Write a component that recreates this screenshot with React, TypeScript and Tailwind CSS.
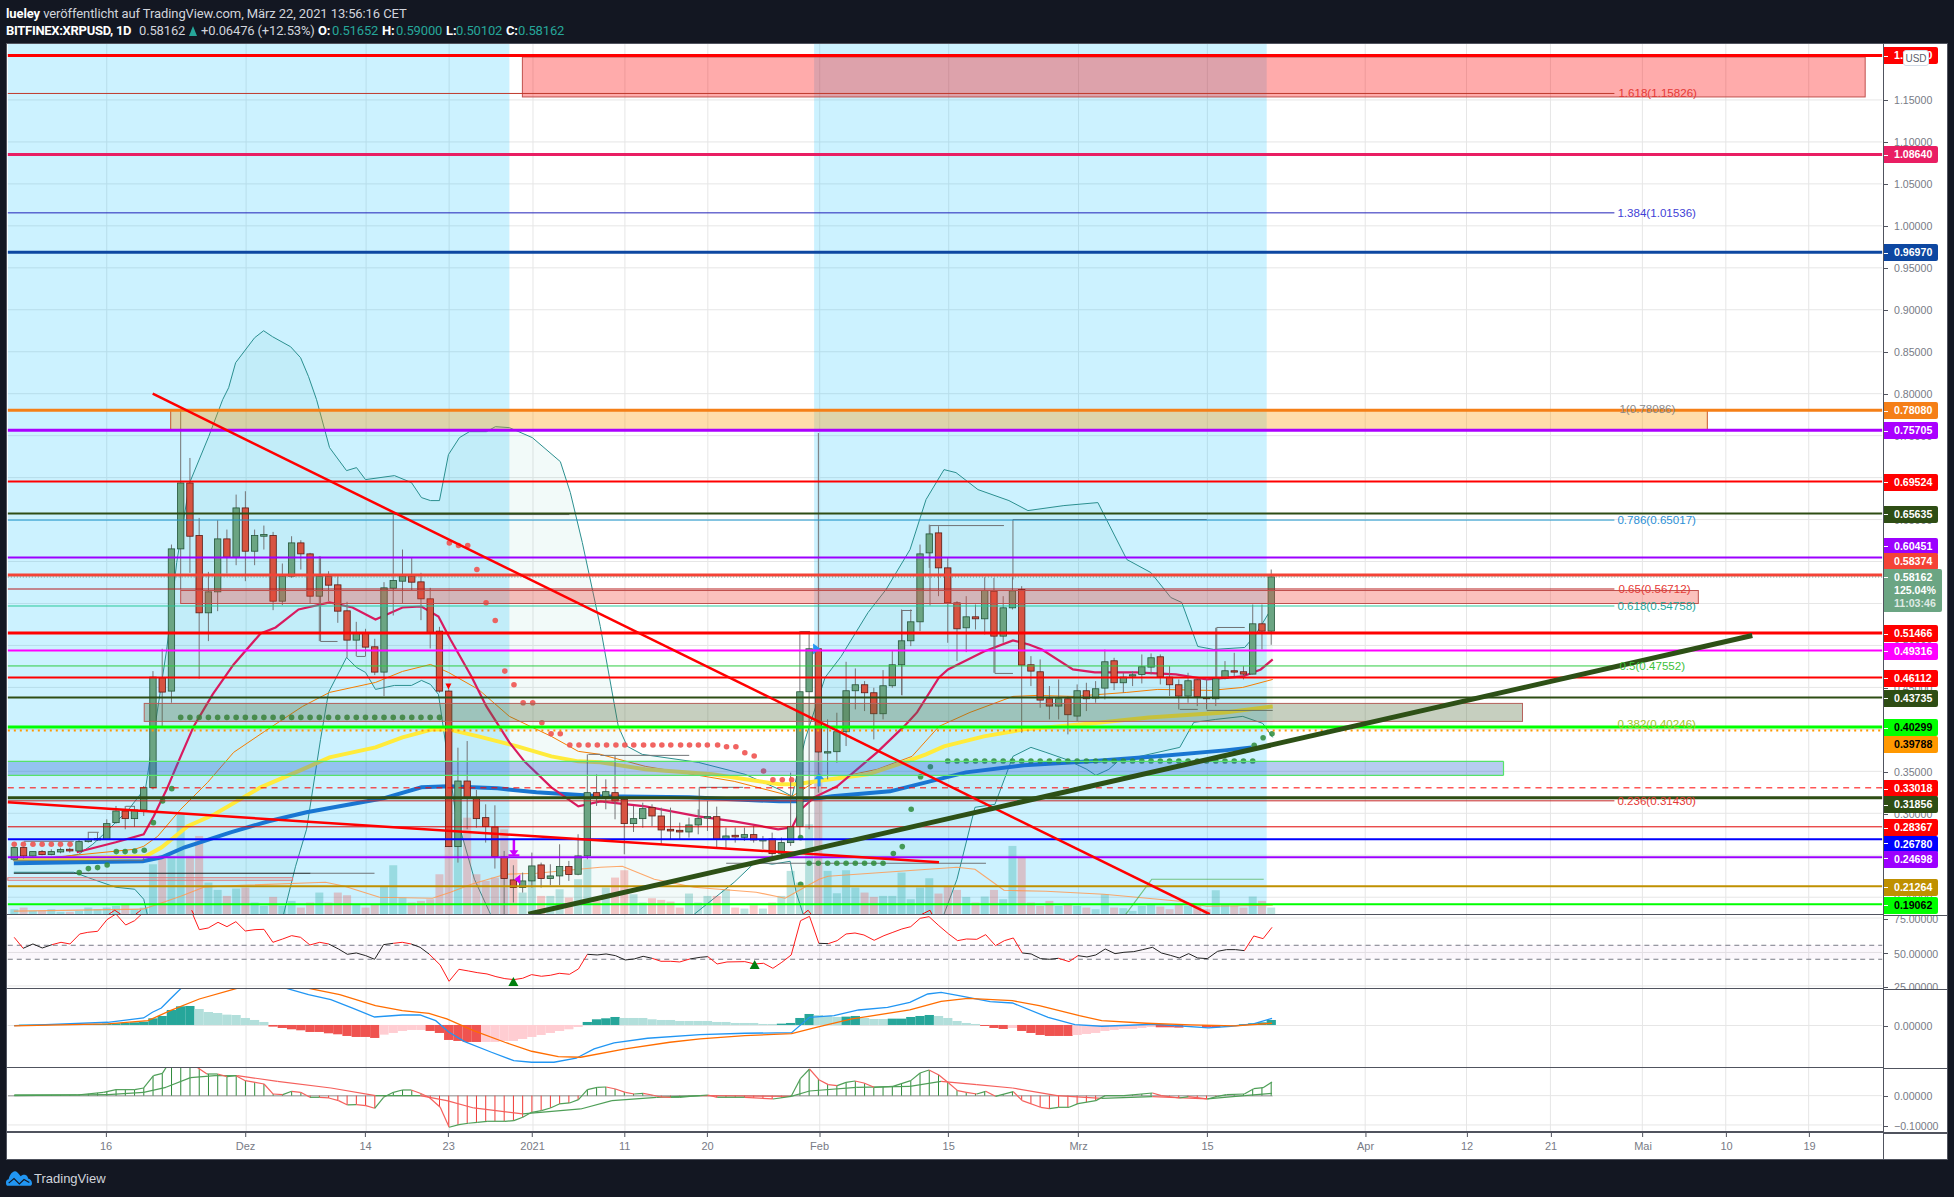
import React from "react";

type Pt = [number, number];
const SANS = "font-['Liberation_Sans',Arial,sans-serif]";

const dayX = (d: number) => 106 + 9.25 * d;
const z5 = (pts: number[][]) => pts.map(([x, y]) => [x / 2.613, y / 3 + 400] as Pt);
const z7 = (pts: number[][]) => pts.map(([x, y]) => [x / 2.24 + 600, y / 3 + 500] as Pt);
const z6 = (pts: number[][]) => pts.map(([x, y]) => [x / 2.24, y / 3 + 880] as Pt);
const z8 = (pts: number[][]) => pts.map(([x, y]) => [x / 2.24 + 700, y / 3 + 880] as Pt);
const poly = (pts: Pt[]) => pts.map(([x, y]) => `${x.toFixed(1)},${y.toFixed(1)}`).join(" ");

// body top, body bottom, wick top, wick bottom, up
const candlesA = [
  [1345, 1380, 1345, 1382, 1], [1345, 1370, 1345, 1378, 0], [1357, 1370, 1357, 1372, 1], [1357, 1366, 1352, 1368, 0],
  [1357, 1366, 1350, 1368, 1], [1351, 1358, 1345, 1362, 1], [1350, 1355, 1345, 1360, 0], [1327, 1355, 1320, 1358, 1],
  [1320, 1327, 1300, 1330, 1], [1318, 1322, 1300, 1325, 1], [1273, 1320, 1260, 1322, 1], [1235, 1270, 1220, 1273, 1],
  [1235, 1258, 1220, 1290, 0], [1232, 1258, 1220, 1283, 1], [1165, 1232, 1160, 1250, 1], [833, 1165, 815, 1170, 1],
  [835, 878, 748, 980, 0], [448, 875, 435, 910, 1], [250, 448, 30, 570, 1], [250, 410, 175, 520, 0],
  [408, 640, 355, 838, 0], [577, 640, 517, 725, 1], [418, 577, 362, 635, 1], [418, 473, 390, 522, 0],
  [325, 473, 285, 497, 1], [325, 455, 275, 545, 0], [408, 455, 390, 497, 1], [405, 410, 378, 450, 1],
  [408, 605, 397, 632, 0], [530, 605, 492, 617, 1], [430, 530, 410, 535, 1], [430, 463, 422, 510, 0],
  [463, 590, 460, 612, 0], [530, 590, 470, 725, 1], [530, 557, 515, 605, 0], [556, 635, 530, 670, 0],
  [634, 722, 607, 775, 0], [700, 722, 667, 770, 1], [700, 743, 688, 770, 0], [742, 818, 718, 827, 0],
  [565, 818, 548, 890, 1], [543, 566, 345, 648, 1], [530, 545, 450, 612, 1], [530, 548, 473, 572, 0],
  [547, 598, 520, 662, 0], [598, 700, 565, 747, 0], [695, 875, 682, 880, 0], [875, 1342, 870, 1342, 0],
  [1145, 1342, 1045, 1390, 1], [1145, 1195, 1025, 1290, 0], [1195, 1258, 1172, 1285, 0], [1255, 1282, 1215, 1330, 0],
  [1283, 1372, 1218, 1408, 0], [1373, 1438, 1355, 1550, 0], [1442, 1465, 1398, 1510, 0], [1445, 1465, 1420, 1480, 1],
  [1400, 1445, 1360, 1465, 1], [1397, 1438, 1390, 1465, 0], [1430, 1438, 1395, 1458, 1], [1402, 1430, 1335, 1458, 1],
  [1402, 1426, 1385, 1445, 0], [1370, 1425, 1305, 1428, 1], [1180, 1370, 1065, 1380, 1], [1180, 1192, 1125, 1220, 0],
];
const candlesB = [
  [877, 892, 840, 930, 1], [880, 905, 770, 960, 0], [900, 973, 890, 1065, 0], [958, 973, 920, 998, 1],
  [928, 958, 910, 985, 1], [925, 950, 915, 980, 0], [950, 992, 925, 1035, 0], [990, 995, 925, 1022, 0],
  [993, 998, 970, 1022, 0], [977, 998, 955, 1015, 1], [958, 977, 930, 1005, 1], [952, 956, 905, 995, 1],
  [952, 1020, 922, 1045, 0], [1010, 1020, 985, 1050, 1], [1008, 1013, 985, 1030, 0], [1006, 1014, 985, 1025, 1],
  [1006, 1022, 980, 1030, 0], [1021, 1025, 1010, 1050, 1], [1019, 1063, 1000, 1075, 0], [1030, 1062, 1015, 1080, 1],
  [982, 1030, 820, 1040, 1], [577, 982, 395, 1020, 1], [448, 577, 395, 990, 1], [448, 758, -200, 880, 0],
  [757, 761, 660, 840, 1], [697, 757, 640, 790, 1], [574, 697, 487, 740, 1], [556, 574, 507, 630, 1],
  [556, 580, 545, 635, 0], [580, 643, 565, 720, 0], [559, 643, 512, 660, 1], [496, 559, 455, 565, 1],
  [424, 496, 330, 587, 1], [367, 424, 330, 440, 1], [163, 367, 135, 395, 1], [103, 160, 75, 205, 1],
  [100, 205, 80, 290, 0], [205, 310, 175, 430, 0], [310, 388, 305, 485, 0], [352, 385, 290, 458, 1],
  [352, 358, 315, 390, 0], [273, 358, 233, 405, 1], [275, 410, 235, 520, 0], [325, 410, 290, 430, 1],
  [274, 325, 232, 330, 1], [270, 497, 260, 700, 0], [496, 515, 470, 560, 0], [517, 602, 480, 625, 0],
  [598, 620, 560, 660, 0], [598, 620, 540, 660, 1], [598, 646, 590, 705, 0], [574, 650, 555, 665, 1],
  [574, 598, 550, 635, 0], [568, 596, 545, 610, 1], [487, 566, 450, 600, 1], [484, 550, 475, 572, 0],
  [533, 550, 520, 580, 1], [526, 530, 515, 560, 1], [502, 525, 465, 552, 1], [475, 503, 462, 525, 1],
  [472, 533, 465, 555, 0], [533, 556, 500, 590, 0], [556, 590, 540, 630, 0], [544, 590, 520, 610, 1],
  [541, 592, 535, 620, 0], [595, 598, 540, 630, 0], [538, 598, 385, 620, 1], [514, 536, 485, 540, 1],
  [514, 518, 460, 535, 0], [517, 524, 500, 540, 0], [373, 524, 315, 525, 1], [373, 395, 315, 450, 0],
  [232, 395, 210, 436, 1],
];
const candles = [
  ...candlesA.map(([t, b, wt, wb, up]) => ({ t: t / 3 + 400, b: b / 3 + 400, wt: wt / 3 + 400, wb: wb / 3 + 400, up: !!up })),
  ...candlesB.map(([t, b, wt, wb, up]) => ({ t: t / 3 + 500, b: b / 3 + 500, wt: wt / 3 + 500, wb: wb / 3 + 500, up: !!up })),
];

const volA = [
  1530, 1525, 1535, 1535, 1530, 1538, 1538, 1535, 1525, 1530, 1525, 1520, 1515, 1530, 1525, 1395, 1370, 1370, 1245, 1370, 1310,
  1450, 1472, 1490, 1468, 1465, 1510, 1520, 1493, 1520, 1505, 1525, 1510, 1480, 1510, 1480, 1488, 1515, 1525, 1515, 1460, 1398,
  1495, 1510, 1505, 1500, 1425, 1340, 1260, 1255, 1425, 1445, 1435, 1290, 1380, 1480, 1430, 1490, 1490, 1470, 1495, 1440, 1380, 1505,
];
const volB = [
  1165, 1135, 1113, 1185, 1210, 1197, 1202, 1207, 1225, 1183, 1210, 1190, 1190, 1170, 1225, 1228, 1218, 1228, 1210, 1190, 1115,
  1150, 975, 760, 1115, 1182, 1113, 1165, 1180, 1193, 1190, 1190, 1120, 1200, 1165, 1137, 1183, 1160, 1172, 1193, 1210, 1192,
  1172, 1200, 1040, 1075, 1210, 1220, 1205, 1220, 1215, 1220, 1225, 1230, 1185, 1225, 1227, 1235, 1220, 1215, 1222, 1230, 1215,
  1220, 1215, 1230, 1173, 1215, 1220, 1225, 1192, 1205, 1225,
];
const volumes = [...volA.map((v) => v / 3 + 400), ...volB.map((v) => v / 3 + 500)];

const bbUpper: Pt[] = [
  [13, 860], [60, 858], [78, 855], [92, 845], [105, 833], [128, 810], [145, 788], [166, 650], [176, 563], [189, 483], [208, 437],
  [222, 400], [228, 388], [235, 363], [254, 338], [263, 331], [272, 337], [290, 347], [300, 358], [308, 377], [316, 400], [329, 448],
  [346, 471], [356, 468], [365, 480], [394, 476], [411, 483], [421, 498], [430, 501], [439, 501], [448, 455], [459, 438], [469, 432],
  [486, 432], [495, 427], [509, 428], [532, 438], [560, 462], [570, 493], [582, 543], [600, 627], [618, 727], [627, 747], [642, 755],
  [698, 763], [745, 775], [779, 790], [792, 797], [805, 740], [825, 678], [841, 657], [868, 613], [886, 590], [910, 550], [926, 500],
  [944, 470], [956, 473], [978, 490], [1009, 501], [1028, 511], [1064, 506], [1098, 503], [1127, 560], [1151, 573], [1171, 598],
  [1182, 603], [1198, 647], [1214, 650], [1245, 648], [1256, 635], [1273, 607],
];
const bbLower: Pt[] = [
  [13, 873], [73, 873], [92, 880], [115, 888], [134, 890], [143, 900], [147, 917], [150, 1000], [280, 1000], [283, 915], [295, 867],
  [306, 830], [320, 740], [328, 693], [346, 658], [356, 668], [365, 673], [375, 690], [394, 686], [411, 686], [421, 681], [430, 685],
  [438, 695], [446, 750], [455, 813], [474, 880], [491, 917], [495, 1000], [690, 1000], [694, 915], [734, 883], [756, 862], [772, 865],
  [790, 862], [796, 893], [803, 915], [806, 1000], [940, 1000], [944, 915], [957, 880], [975, 808], [995, 805], [1013, 757], [1031, 748],
  [1046, 753], [1066, 760], [1087, 770], [1096, 776], [1109, 770], [1118, 762], [1180, 748], [1194, 723], [1216, 720], [1243, 717],
  [1263, 724], [1273, 738],
];
const ma20: Pt[] = [
  [76, 853], [115, 843], [143, 835], [153, 817], [166, 790], [180, 757], [193, 727], [212, 695], [233, 665], [260, 634], [275, 628],
  [298, 610], [329, 603], [352, 608], [375, 620], [402, 608], [421, 607], [438, 617], [450, 640], [471, 677], [486, 707], [509, 743],
  [524, 762], [551, 788], [578, 807], [600, 802], [645, 807], [698, 817], [734, 822], [778, 830], [792, 828], [801, 810], [814, 798],
  [837, 787], [877, 753], [904, 727], [917, 713], [939, 678], [948, 670], [984, 652], [1013, 641], [1029, 645], [1042, 650], [1073, 670],
  [1095, 673], [1136, 673], [1176, 675], [1207, 680], [1243, 677], [1261, 670], [1273, 660],
];
const ma50: Pt[] = [
  [13, 862], [134, 850], [143, 847], [157, 837], [180, 810], [207, 783], [233, 753], [264, 732], [302, 707], [329, 693], [375, 683],
  [402, 672], [430, 665], [448, 673], [478, 690], [509, 717], [551, 737], [578, 752], [600, 755], [645, 767], [734, 782], [792, 797],
  [814, 783], [877, 770], [912, 757], [939, 727], [970, 713], [1013, 697], [1037, 696], [1073, 697], [1127, 693], [1158, 690], [1211, 691],
  [1243, 688], [1273, 680],
];
const ma100: Pt[] = [
  [13, 861], [145, 857], [161, 848], [187, 827], [214, 815], [260, 788], [302, 770], [329, 758], [375, 748], [402, 738], [432, 730],
  [448, 730], [478, 737], [517, 747], [551, 757], [578, 762], [600, 763], [645, 770], [712, 775], [779, 785], [796, 785], [823, 781],
  [868, 775], [904, 763], [926, 755], [944, 747], [984, 737], [1024, 730], [1091, 724], [1149, 718], [1225, 713], [1273, 707],
];
const ma200: Pt[] = [
  [13, 864], [142, 862], [161, 858], [184, 848], [230, 833], [268, 822], [306, 813], [383, 799], [421, 788], [448, 787], [497, 789],
  [536, 793], [600, 797], [689, 798], [779, 802], [796, 802], [832, 797], [890, 792], [930, 782], [966, 773], [1024, 766], [1091, 762],
  [1158, 757], [1225, 751], [1252, 748],
];
const volMa: Pt[] = [
  [13, 912], [142, 910], [157, 905], [180, 897], [203, 888], [241, 886], [325, 883], [344, 887], [379, 898], [432, 899], [450, 893],
  [471, 885], [505, 875], [536, 874], [600, 868], [622, 867], [654, 880], [694, 888], [756, 893], [785, 899], [801, 890], [819, 880],
  [828, 877], [957, 868], [975, 870], [1004, 891], [1046, 892], [1104, 895], [1180, 902], [1207, 907], [1273, 906],
];

const redDots: Pt[] = [
  ...z5([[35, 1335], [59, 1335], [84, 1335], [108, 1335], [132, 1335], [156, 1335], [181, 1335], [1173, 430], [1197, 438], [1221, 438], [1245, 510], [1269, 610], [1293, 663], [1318, 815], [1342, 856], [1366, 910], [1391, 910], [1415, 970], [1439, 1003], [1463, 1003], [1488, 1037], [1512, 1037], [1536, 1037], [1560, 1037]]),
  ...z7([[14, 737], [35, 737], [55, 737], [75, 737], [97, 737], [118, 737], [138, 737], [158, 737], [180, 737], [200, 737], [220, 737], [240, 737], [263, 737], [283, 742], [304, 742], [324, 760], [345, 770], [366, 815], [387, 841], [408, 841], [429, 841]]),
];
const greenDots: Pt[] = [
  ...z5([[205, 1420], [229, 1408], [253, 1405], [278, 1397], [302, 1357], [325, 1357], [350, 1355], [375, 1353], [399, 1270], [423, 1205], [447, 1168]]),
  ...Array.from({ length: 29 }, (_, i) => [dayX(8 + i), 718] as Pt),
  ...z7([[449, 1155], [449, 1015], [657, 1063], [677, 1042], [697, 930], [718, 832], [740, 802], [1466, 738], [1486, 715], [1506, 703]]),
  ...Array.from({ length: 34 }, (_, i) => [dayX(91 + i), 761.7] as Pt),
  ...Array.from({ length: 9 }, (_, i) => [dayX(76 + i), 864] as Pt),
];

// gray step lines left by the high/low indicator
const steps: number[][] = [
  [930, 526, 1004, 526], [930, 526, 930, 606], [1013, 520, 1207, 520], [1013, 520, 1013, 580], [902, 611, 912, 611], [902, 611, 902, 696],
  [800, 632, 810, 632], [995, 674, 1013, 674], [995, 637, 995, 674], [1180, 710, 1198, 710], [1207, 711, 1273, 711], [1217, 628, 1245, 628],
  [1217, 628, 1217, 699], [1254, 604, 1263, 604], [726, 864, 986, 864], [699, 788, 743, 788], [699, 788, 699, 817], [600, 756, 689, 756],
  [394, 515, 569, 515], [320, 642, 337, 642], [320, 557, 320, 642], [356, 657, 365, 657], [87, 833, 98, 833], [23, 842, 73, 842],
  [125, 807, 134, 807], [588, 755, 600, 755], [310, 874, 374, 874], [12, 861, 143, 861], [143, 858, 143, 861],
];

const rsiPts: Pt[] = [
  ...z6([[30, 175], [50, 208], [72, 195], [93, 207], [115, 197], [135, 190], [155, 195], [177, 165], [195, 160], [217, 157], [238, 122], [258, 105], [280, 138], [300, 125], [320, 100], [340, 85], [420, 85], [430, 105], [445, 152], [465, 147], [487, 130], [507, 143], [527, 128], [548, 156], [570, 152], [590, 151], [610, 190], [632, 180], [652, 170], [672, 175], [693, 198], [715, 190], [735, 195], [757, 210], [777, 226], [797, 222], [818, 230], [838, 241], [858, 197], [880, 193], [900, 190], [920, 195], [940, 205], [960, 225], [985, 258], [1005, 307], [1027, 271], [1048, 276], [1068, 281], [1090, 285], [1110, 293], [1130, 299], [1150, 302], [1170, 298], [1190, 287], [1212, 292], [1232, 289], [1252, 283], [1275, 286], [1295, 270], [1315, 226], [1337, 228], [1357, 225], [1378, 230], [1400, 243], [1420, 240], [1440, 232], [1460, 238], [1480, 247], [1502, 247], [1522, 249], [1545, 240]]),
  ...z8([[0, 235], [17, 233], [38, 255], [60, 249], [100, 248], [122, 255], [142, 253], [163, 268], [183, 250], [204, 228], [225, 125], [245, 112], [266, 193], [287, 194], [307, 185], [327, 165], [347, 162], [367, 168], [390, 184], [412, 170], [432, 160], [452, 150], [472, 143], [493, 118], [513, 113], [535, 140], [557, 165], [577, 185], [597, 180], [620, 181], [640, 167], [662, 200], [682, 185], [702, 177], [722, 222], [742, 225], [763, 239], [783, 241], [803, 238], [827, 248], [847, 230], [867, 234], [887, 228], [908, 210], [930, 224], [950, 220], [972, 218], [992, 212], [1014, 205], [1034, 222], [1054, 229], [1074, 237], [1095, 224], [1115, 237], [1137, 239], [1160, 217], [1180, 212], [1200, 212], [1220, 215], [1241, 171], [1262, 179], [1282, 145]]),
];

const macdTops = [
  438, 437, 437, 437, 436, 436, 436, 436, 435, 435, 434, 433, 432, 430, 428, 418, 411, 393, 382, 381, 390, 399, 402, 407, 408, 417, 423, 429,
  443, 447, 451, 454, 459, 459, 463, 466, 471, 474, 474, 477, 467, 462, 456, 453, 453, 456, 462, 483, 486, 489, 489, 488.9, 488.9, 486, 486, 480,
  474, 468, 462, 456, 451, 444, 429, 421, 418, 414, 417, 417, 417, 421, 423, 423, 426, 426, 426,
  426, 429, 429, 432, 432, 432, 435, 435, 434, 432, 417, 405, 408, 411, 414, 413, 411, 417, 420, 420, 419, 419, 414, 411, 408, 411, 417, 426,
  432, 435, 441, 447, 450, 447, 456, 462, 468, 471, 471, 471, 468, 465, 462, 456, 453, 450, 450, 447, 444, 445, 445, 446, 443, 441, 445,
  445, 441, 438, 436, 433, 430, 423,
];
const macdBars = (() => {
  let strong = true;
  return macdTops.map((top, i) => {
    const v = 438 - top;
    const prev = i ? 438 - macdTops[i - 1] : v;
    if (v !== prev) strong = v >= 0 ? v > prev : v < prev;
    const fill = v >= 0 ? (strong ? "#26a69a" : "#b2dfdb") : strong ? "#ef5350" : "#ffcdd2";
    return { top, fill };
  });
})();
const macdBlue: Pt[] = [
  ...z6([[30, 440], [100, 437], [240, 430], [320, 417], [340, 400], [360, 387], [380, 360], [405, 327], [430, 290], [600, 290], [640, 328], [690, 347], [740, 362], [790, 388], [838, 414], [900, 408], [940, 408], [975, 425], [1005, 460], [1040, 488], [1100, 520], [1150, 545], [1190, 550], [1240, 550], [1290, 538], [1330, 510], [1375, 492], [1450, 478], [1568, 467]]),
  ...z8([[100, 463], [205, 461], [245, 415], [300, 410], [355, 393], [420, 385], [470, 370], [510, 345], [540, 340], [580, 350], [650, 368], [700, 372], [780, 415], [840, 437], [900, 442], [1020, 436], [1140, 447], [1190, 442], [1240, 435], [1282, 418]]),
];
const macdOrange: Pt[] = [
  ...z6([[30, 441], [240, 435], [330, 425], [380, 395], [445, 360], [530, 328], [560, 318], [660, 318], [690, 328], [760, 347], [840, 380], [900, 395], [960, 403], [1000, 420], [1060, 455], [1130, 490], [1190, 517], [1250, 533], [1300, 535], [1400, 510], [1500, 490], [1568, 480]]),
  ...z8([[100, 470], [205, 464], [260, 445], [340, 420], [470, 393], [540, 367], [600, 358], [700, 365], [760, 380], [850, 410], [900, 425], [1000, 433], [1100, 438], [1200, 441], [1282, 433]]),
];
const osciA: Pt[] = [
  ...z6([[30, 648], [170, 648], [230, 640], [258, 632], [300, 632], [320, 627], [342, 590], [362, 583], [372, 562], [385, 530], [425, 530], [440, 565], [462, 585], [486, 585], [507, 593], [527, 590], [548, 605], [570, 610], [590, 615], [610, 645], [632, 647], [652, 637], [672, 640], [693, 655], [715, 655], [735, 657], [757, 665], [777, 678], [797, 677], [818, 680], [838, 688], [858, 655], [880, 640], [900, 633], [920, 633], [940, 643], [960, 655], [985, 685], [1005, 745], [1027, 737], [1048, 733], [1068, 730], [1090, 727], [1110, 727], [1130, 727], [1150, 725], [1170, 715], [1190, 700], [1212, 695], [1232, 687], [1252, 675], [1275, 672], [1295, 662], [1315, 632], [1337, 625], [1357, 624], [1378, 630], [1400, 640], [1420, 645], [1440, 643], [1460, 648], [1480, 654], [1502, 655], [1522, 655], [1545, 652]]),
  ...z8([[0, 650], [17, 648], [38, 655], [100, 655], [163, 660], [204, 652], [225, 598], [245, 570], [266, 602], [287, 617], [307, 620], [327, 610], [347, 606], [367, 612], [390, 625], [432, 622], [472, 605], [493, 582], [513, 573], [535, 588], [557, 612], [577, 635], [597, 640], [620, 645], [640, 637], [662, 652], [702, 638], [722, 665], [763, 685], [783, 689], [803, 685], [827, 685], [847, 674], [887, 665], [908, 650], [950, 650], [1014, 642], [1034, 650], [1074, 657], [1095, 653], [1137, 660], [1160, 652], [1180, 647], [1220, 645], [1241, 629], [1262, 626], [1282, 609]]),
];
const osciB: Pt[] = [
  ...z6([[30, 650], [240, 647], [320, 640], [370, 625], [425, 596], [480, 590], [530, 590], [620, 607], [740, 627], [840, 650], [940, 650], [1000, 665], [1060, 687], [1170, 705], [1300, 690], [1370, 665], [1470, 655]]),
  ...z8([[0, 650], [204, 652], [245, 636], [350, 625], [470, 622], [540, 607], [620, 617], [700, 627], [800, 650], [900, 658], [1014, 653], [1137, 660], [1220, 650], [1282, 643]]),
];

const interp = (pts: Pt[], x: number) => {
  for (let i = 1; i < pts.length; i++) {
    if (x <= pts[i][0]) {
      const [x0, y0] = pts[i - 1];
      const [x1, y1] = pts[i];
      return y0 + ((y1 - y0) * (x - x0)) / (x1 - x0 || 1);
    }
  }
  return pts[pts.length - 1][1];
};

const gridX = [106, 245.5, 365.6, 448.7, 532.6, 624.6, 707.6, 819.6, 948.7, 1078.6, 1207.6, 1365.6, 1467, 1551, 1643, 1726.5, 1809.5];
const timeLabels: [number, string][] = [
  [106, "16"], [245.5, "Dez"], [365.6, "14"], [448.7, "23"], [532.6, "2021"], [624.6, "11"], [707.6, "20"], [819.6, "Feb"],
  [948.7, "15"], [1078.6, "Mrz"], [1207.6, "15"], [1365.6, "Apr"], [1467, "12"], [1551, "21"], [1643, "Mai"], [1726.5, "10"], [1809.5, "19"],
];
const priceY = (p: number) => 772 + (0.35 - p) * 840;
const gridY = Array.from({ length: 20 }, (_, i) => priceY(0.2 + i * 0.05));

const hLines: { y: number; c: string; w: number; to?: number; dash?: string }[] = [
  { y: 55.5, c: "#ff0000", w: 3 },
  { y: 93.5, c: "#c0392b", w: 1, to: 1615 },
  { y: 154.5, c: "#e91e63", w: 3 },
  { y: 213, c: "#2020b8", w: 1, to: 1615 },
  { y: 252.5, c: "#0d47a1", w: 3 },
  { y: 410.5, c: "#f57f17", w: 3 },
  { y: 430.5, c: "#aa00ff", w: 3 },
  { y: 482, c: "#ff0000", w: 2 },
  { y: 514, c: "#2e4d14", w: 2 },
  { y: 520.5, c: "#2196c9", w: 1, to: 1615 },
  { y: 558, c: "#9c00ff", w: 2 },
  { y: 575.5, c: "#f44336", w: 3 },
  { y: 577.5, c: "#6b8f78", w: 1, dash: "1 2" },
  { y: 589.5, c: "#b71c1c", w: 1, to: 1615 },
  { y: 606.5, c: "#26c99a", w: 1, to: 1615 },
  { y: 633.5, c: "#ff0000", w: 3 },
  { y: 651, c: "#ff00ff", w: 2 },
  { y: 666.5, c: "#2ecc40", w: 1, to: 1615 },
  { y: 678, c: "#ff0000", w: 2 },
  { y: 698, c: "#2e4d14", w: 2 },
  { y: 727.5, c: "#00ff00", w: 3 },
  { y: 731, c: "#ff9800", w: 2, dash: "2 4" },
  { y: 788.5, c: "#ff0000", w: 1, dash: "6 5" },
  { y: 798.5, c: "#2e4d14", w: 3 },
  { y: 801.5, c: "#c62828", w: 1, to: 1615 },
  { y: 827.5, c: "#e00000", w: 1 },
  { y: 840, c: "#0000ff", w: 2 },
  { y: 858, c: "#9c00ff", w: 2 },
  { y: 887, c: "#bf9000", w: 2 },
  { y: 905, c: "#00ff00", w: 2 },
];

const fibLabels: { x: number; y: number; c: string; t: string }[] = [
  { x: 1619, y: 93.5, c: "#e53935", t: "1.618(1.15826)" },
  { x: 1618, y: 213, c: "#3f3fd6", t: "1.384(1.01536)" },
  { x: 1620, y: 409, c: "#8a8a8a", t: "1(0.78086)" },
  { x: 1618, y: 520.5, c: "#2b8fd6", t: "0.786(0.65017)" },
  { x: 1619, y: 589.5, c: "#e53935", t: "0.65(0.56712)" },
  { x: 1618, y: 606.5, c: "#26a69a", t: "0.618(0.54758)" },
  { x: 1620, y: 666.5, c: "#3cc13c", t: "0.5(0.47552)" },
  { x: 1618, y: 725, c: "#a5c326", t: "0.382(0.40246)" },
  { x: 1618, y: 801.5, c: "#e53935", t: "0.236(0.31430)" },
];

const priceLabels: { top: number; bg: string; text: string; tick?: number; dark?: boolean }[] = [
  { top: 47, bg: "bg-[#ff0000]", text: "1.20000", tick: 55.5 },
  { top: 146, bg: "bg-[#e91e63]", text: "1.08640", tick: 154.5 },
  { top: 244, bg: "bg-[#0d47a1]", text: "0.96970", tick: 252.5 },
  { top: 402, bg: "bg-[#f57f17]", text: "0.78080", tick: 410.5 },
  { top: 422, bg: "bg-[#aa00ff]", text: "0.75705", tick: 430.5 },
  { top: 474, bg: "bg-[#ff0000]", text: "0.69524", tick: 482 },
  { top: 506, bg: "bg-[#2e4d14]", text: "0.65635", tick: 514 },
  { top: 538, bg: "bg-[#9c00ff]", text: "0.60451", tick: 546 },
  { top: 553, bg: "bg-[#f44336]", text: "0.58374" },
  { top: 625, bg: "bg-[#ff0000]", text: "0.51466", tick: 633.5 },
  { top: 643, bg: "bg-[#ff00ff]", text: "0.49316", tick: 651 },
  { top: 670, bg: "bg-[#ff0000]", text: "0.46112", tick: 678 },
  { top: 690, bg: "bg-[#2e4d14]", text: "0.43735", tick: 698 },
  { top: 719, bg: "bg-[#00ff00]", text: "0.40299", tick: 727.5, dark: true },
  { top: 736, bg: "bg-[#ff9800]", text: "0.39788", dark: true },
  { top: 780, bg: "bg-[#ff0000]", text: "0.33018", tick: 788.5 },
  { top: 796, bg: "bg-[#2e4d14]", text: "0.31856", tick: 805 },
  { top: 819, bg: "bg-[#ff0000]", text: "0.28367", tick: 827.5 },
  { top: 836, bg: "bg-[#0000ff]", text: "0.26780", tick: 843 },
  { top: 851, bg: "bg-[#9c00ff]", text: "0.24698", tick: 858 },
  { top: 879, bg: "bg-[#bf9000]", text: "0.21264", tick: 887 },
  { top: 897, bg: "bg-[#00ff00]", text: "0.19062", tick: 905, dark: true },
];

function Grid({ x0, x1, ys, y0, y1 }: { x0: number; x1: number; ys: number[]; y0: number; y1: number }) {
  return (
    <g stroke="#e6e6e6" strokeWidth="1">
      {gridX.map((x) => (
        <line key={x} x1={x} x2={x} y1={y0} y2={y1} />
      ))}
      {ys.map((y) => (
        <line key={y} x1={x0} x2={x1} y1={y} y2={y} />
      ))}
    </g>
  );
}

function MainPane() {
  return (
    <svg viewBox="7 44 1876 871" className="block h-[871px] w-[1876px]">
      <rect x="7" y="44" width="1876" height="871" fill="#ffffff" />
      <Grid x0={7} x1={1883} ys={gridY} y0={44} y1={915} />
      <rect x="7" y="44" width="502" height="871" fill="rgb(0,188,255)" fillOpacity="0.2" />
      <rect x="814" y="44" width="453" height="871" fill="rgb(0,188,255)" fillOpacity="0.2" />
      <polygon points={poly([...bbUpper, ...[...bbLower].reverse()])} fill="#26a69a" fillOpacity="0.06" />
      <polyline points={poly(bbUpper)} fill="none" stroke="#2a8f8f" strokeWidth="1" />
      <polyline points={poly(bbLower)} fill="none" stroke="#2a8f8f" strokeWidth="1" />
      {volumes.map((top, i) => (
        <rect
          key={i}
          x={dayX(i - 10) - 4}
          y={top}
          width="8"
          height={Math.max(915 - top, 0)}
          fill={candles[i]?.up ? "#26a69a" : "#ef5350"}
          fillOpacity="0.3"
        />
      ))}
      <polyline points={poly(volMa)} fill="none" stroke="#ff9a52" strokeWidth="1.2" strokeOpacity="0.85" />
      <polyline points={poly(ma50)} fill="none" stroke="#f57c00" strokeWidth="1" />
      <polyline points={poly(ma100)} fill="none" stroke="#ffeb3b" strokeWidth="4" />
      <polyline points={poly(ma200)} fill="none" stroke="#1976d2" strokeWidth="4" />
      <polyline points={poly(ma20)} fill="none" stroke="#d81b60" strokeWidth="2.2" />
      {steps.map(([x1, y1, x2, y2], i) => (
        <line key={i} x1={x1} y1={y1} x2={x2} y2={y2} stroke="#6f7275" strokeWidth="1" />
      ))}
      <line x1="13" x2="310" y1="874" y2="874" stroke="#222222" />
      <rect x="7" y="878.5" width="285" height="2.5" fill="none" stroke="#e57373" strokeWidth="1" />
      <polyline points="1126,915 1152,880 1264,880" fill="none" stroke="#4caf50" strokeOpacity="0.7" strokeWidth="1.2" />
      {candles.map((c, i) => {
        const x = dayX(i - 10);
        return (
          <g key={i}>
            <line x1={x} x2={x} y1={c.wt} y2={Math.min(c.wb, 915)} stroke="#737375" strokeWidth="1" />
            <rect
              x={x - 3.2}
              y={c.t}
              width="6.4"
              height={c.b - c.t}
              fill={c.up ? "#6ba583" : "#d75442"}
              stroke={c.up ? "#225437" : "#5b1a13"}
              strokeWidth="0.8"
            />
          </g>
        );
      })}
      {redDots.map(([x, y], i) => (
        <circle key={i} cx={x} cy={y} r="2.8" fill="#ef5350" fillOpacity="0.9" />
      ))}
      {greenDots.map(([x, y], i) => (
        <circle key={i} cx={x} cy={y} r="2.8" fill="#2e8b3a" fillOpacity="0.85" />
      ))}
      <polygon points="445,684 451,684 448,690" fill="#ff0000" />
      {/* signal arrows */}
      <polyline points="513.5,840 513.5,853" stroke="#cc00ff" strokeWidth="2.5" fill="none" />
      <polygon points="509,851 518,851 513.5,857" fill="#cc00ff" />
      <rect x="508" y="855" width="11" height="2" fill="#cc00ff" />
      <polygon points="514,880 520,875 520,885" fill="#cc00ff" />
      <polyline points="819,787 819,775" stroke="#2196f3" strokeWidth="3" fill="none" />
      <polygon points="814,780 824,780 819,774" fill="#2196f3" />
      <polygon points="813,644 820,649 813,655" fill="#2196f3" />
      {/* clipped signal marks on the pane edge */}
      <g fill="none" stroke="#ff0000" strokeWidth="1">
        <polyline points="108,915 114,911 120,915" />
        <polyline points="135,915 140,911" />
        <polyline points="191,911 193,915" />
        <polyline points="803,915 808,911 811,915" />
        <polyline points="922,915 930,911 932,915" />
      </g>
      {/* drawn zones */}
      <rect x="522" y="57" width="1344" height="40" fill="#ff0000" fillOpacity="0.33" stroke="#c0504d" />
      <rect x="170" y="410" width="1538" height="20" fill="#ff9800" fillOpacity="0.33" stroke="#c8582a" />
      <rect x="180" y="591" width="1519" height="13" fill="#f44336" fillOpacity="0.33" stroke="#c0504d" />
      <rect x="143.5" y="704" width="1379.5" height="18" fill="rgb(82,109,61)" fillOpacity="0.33" stroke="#b5605a" />
      <rect x="7" y="762" width="1497" height="14" fill="rgb(33,100,210)" fillOpacity="0.33" />
      <line x1="7" x2="1504" y1="762" y2="762" stroke="#56e36a" strokeWidth="1.2" />
      <line x1="7" x2="1504" y1="776" y2="776" stroke="#56e36a" strokeWidth="1.2" />
      <line x1="1504" x2="1504" y1="762" y2="776" stroke="#56e36a" strokeWidth="1.2" />
      {hLines.map((l, i) => (
        <line key={i} x1="7" x2={l.to ?? 1883} y1={l.y} y2={l.y} stroke={l.c} strokeWidth={l.w} strokeDasharray={l.dash} />
      ))}
      <line x1="152" y1="394" x2="1210" y2="915" stroke="#ff0000" strokeWidth="2.5" />
      <line x1="7" y1="803" x2="939" y2="863" stroke="#ff0000" strokeWidth="2.5" />
      <line x1="528" y1="915" x2="1753" y2="636" stroke="#2d5016" strokeWidth="5" />
      {fibLabels.map((f) => (
        <text key={f.t} x={f.x} y={f.y + 4} fill={f.c} fontSize="11.6" fontFamily="Liberation Sans, Arial, sans-serif">
          {f.t}
        </text>
      ))}
    </svg>
  );
}

function RsiPane() {
  return (
    <svg viewBox="7 916 1876 73" className="block h-[73px] w-[1876px]">
      <Grid x0={7} x1={1883} ys={[919, 953.5, 987]} y0={916} y1={989} />
      <rect x="7" y="946" width="1876" height="14" fill="#9c27b0" fillOpacity="0.04" />
      <line x1="7" x2="1883" y1="946.3" y2="946.3" stroke="#787b86" strokeDasharray="5 4" />
      <line x1="7" x2="1883" y1="960.3" y2="960.3" stroke="#787b86" strokeDasharray="5 4" />
      {rsiPts.slice(1).map(([x, y], i) => {
        const [px, py] = rsiPts[i];
        const neutral = py >= 944 && py <= 961 && y >= 944 && y <= 961;
        return <line key={i} x1={px} y1={py} x2={x} y2={y} stroke={neutral ? "#222222" : "#ff1a1a"} strokeWidth="1" />;
      })}
      <polygon points="513,978 508,987 518,987" fill="#007f0e" />
      <polygon points="754.5,961 749.5,970 759.5,970" fill="#007f0e" />
    </svg>
  );
}

function MacdPane() {
  const base = 438 / 3 + 880;
  return (
    <svg viewBox="7 990 1876 78" className="block h-[78px] w-[1876px]">
      <Grid x0={7} x1={1883} ys={[1026.5]} y0={990} y1={1068} />
      {macdBars.map(({ top, fill }, i) => {
        const y = top / 3 + 880;
        return (
          <rect key={i} x={dayX(i - 10) - 4.6} y={Math.min(y, base)} width="9.25" height={Math.abs(base - y)} fill={fill} />
        );
      })}
      <polyline points={poly(macdBlue)} fill="none" stroke="#2196f3" strokeWidth="1.3" />
      <polyline points={poly(macdOrange)} fill="none" stroke="#ff6d00" strokeWidth="1.3" />
    </svg>
  );
}

function segments(pts: Pt[]) {
  return pts.slice(1).map(([x, y], i) => {
    const [px, py] = pts[i];
    return <line key={i} x1={px} y1={py} x2={x} y2={y} stroke={y <= py ? "#4f9f58" : "#f5605c"} strokeWidth="1.2" />;
  });
}

function OscPane() {
  const base = 650 / 3 + 880;
  return (
    <svg viewBox="7 1069 1876 63" className="block h-[63px] w-[1876px]">
      <Grid x0={7} x1={1883} ys={[1126]} y0={1069} y1={1132} />
      <line x1="7" x2="1273" y1={base} y2={base} stroke="#b0b0b0" strokeWidth="1.5" />
      <line x1="1273" x2="1883" y1={base} y2={base} stroke="#e6e6e6" />
      {candles.map((_, i) => {
        const x = dayX(i - 10);
        const y = interp(osciA, x);
        return <line key={i} x1={x} x2={x} y1={base} y2={y} stroke={y <= base ? "#2e8b3a" : "#f03a36"} strokeWidth="1" />;
      })}
      {segments(osciB)}
      {segments(osciA)}
    </svg>
  );
}

function TimeAxis() {
  return (
    <div className="relative h-[28px] w-[1876px] border-t-2 border-[#50535e]">
      {timeLabels.map(([x, t]) => (
        <div key={t + x} className="absolute top-0 flex -translate-x-1/2 flex-col items-center" style={{ left: x - 7 }}>
          <div className="h-[4px] w-px bg-[#50535e]" />
          <span className="mt-[2px] text-[11px] leading-[14px] text-[#787b86]">{t}</span>
        </div>
      ))}
    </div>
  );
}

function AxisTick({ top, label }: { top: number; label: string }) {
  return (
    <div className="absolute left-0 flex h-[14px] items-center" style={{ top: top - 7 }}>
      <div className="h-px w-[4px] bg-[#50535e]" />
      <span className="ml-[6px] text-[10.6px] leading-[14px] whitespace-nowrap text-[#787b86]">{label}</span>
    </div>
  );
}

function PriceAxis() {
  return (
    <div className={`relative h-[871px] overflow-hidden ${SANS}`}>
      {gridY.map((y) => (
        <AxisTick key={y} top={y - 44} label={((772 - y) / 840 + 0.35).toFixed(5)} />
      ))}
      {priceLabels.map((l) => (
        <div
          key={l.text}
          className={`absolute left-0 flex h-[17px] w-[54px] items-center rounded-r-[2px] pl-[10px] text-[10.6px] font-bold ${l.bg} ${l.dark ? "text-black" : "text-white"}`}
          style={{ top: l.top - 44 }}
        >
          {l.text}
          {l.tick !== undefined && <div className="absolute left-0 h-px w-[4px] bg-white" style={{ top: l.tick - l.top }} />}
        </div>
      ))}
      <div className="absolute left-0 top-[525px] flex h-[43px] w-[58px] flex-col rounded-r-[2px] bg-[#6ba583] pl-[10px] pt-[2px] text-[10.6px] leading-[13px] font-bold text-white">
        <span>0.58162</span>
        <span>125.04%</span>
        <span className="text-[#dfeae3]">11:03:46</span>
        <div className="absolute left-0 top-[8px] h-px w-[4px] bg-white" />
      </div>
      <div className="absolute left-[19px] top-[6px] flex h-[16px] w-[26px] items-center justify-center rounded-[3px] border border-[#d1dbe6] bg-white text-[10px] text-[#5d606b]">
        USD
      </div>
    </div>
  );
}

function LowerAxis({ h, ticks, clip }: { h: string; ticks: [number, string][]; clip?: boolean }) {
  return (
    <div className={`relative ${h} ${clip ? "overflow-hidden" : ""}`}>
      {ticks.map(([y, t]) => (
        <AxisTick key={t} top={y} label={t} />
      ))}
    </div>
  );
}

function TradingViewLogo() {
  return (
    <svg viewBox="0 0 78 44" className="h-[15px] w-[26px]">
      <path
        d="M4 44C0 42 0 36 0 33C0 28 4 24 8 24C9 16 17 0 27 0C32 0 36 5 44 15C47 11 55 9 60 12C64 14 66 18 66 22C72 23 78 29 78 36C78 40 76 43 73 44Z"
        fill="#2196f3"
      />
      <polyline points="8,36 24,22 40,38 54,25 70,34" fill="none" stroke="#131722" strokeWidth="3.5" />
    </svg>
  );
}

export default function App() {
  return (
    <div className={`flex h-[1197px] w-[1954px] flex-col overflow-hidden bg-[#131722] ${SANS}`}>
      <header className="flex h-[43px] flex-col pl-[6px] pt-[5px] font-['Roboto',Arial,sans-serif] text-[13px] leading-[17px] text-[#d1d4dc]">
        <div className="tracking-[-0.1px]">
          <span className="font-bold text-white">lueley</span> veröffentlicht auf TradingView.com, März 22, 2021 13:56:16 CET
        </div>
        <div className="flex items-center tracking-[-0.15px] whitespace-pre">
          <span className="w-[128px] font-bold tracking-[-0.3px] text-white">BITFINEX:XRPUSD, 1D</span>
          <span className="ml-[5px] w-[46px]">0.58162</span>
          <span className="ml-[4px] h-0 w-0 border-x-[4.5px] border-b-[10px] border-x-transparent border-b-[#26a69a]" />
          <span className="ml-[4px] w-[113px]">+0.06476 (+12.53%)</span>
          <span className="ml-[4px] w-[14px] font-bold text-white">O:</span>
          <span className="w-[46px] text-[#26a69a]">0.51652</span>
          <span className="ml-[4px] w-[14px] font-bold text-white">H:</span>
          <span className="w-[46px] text-[#26a69a]">0.59000</span>
          <span className="ml-[4px] w-[10px] font-bold text-white">L:</span>
          <span className="w-[46px] text-[#26a69a]">0.50102</span>
          <span className="ml-[4px] w-[12px] font-bold text-white">C:</span>
          <span className="w-[46px] text-[#26a69a]">0.58162</span>
        </div>
      </header>

      <main className="ml-[6px] flex h-[1117px] w-[1942px] border border-[#50535e] bg-white">
        <div className="flex w-[1876px] flex-col">
          <MainPane />
          <div className="h-px bg-[#50535e]" />
          <RsiPane />
          <div className="h-px bg-[#50535e]" />
          <MacdPane />
          <div className="h-px bg-[#50535e]" />
          <OscPane />
          <TimeAxis />
        </div>
        <div className="flex flex-1 flex-col border-l border-[#50535e]">
          <PriceAxis />
          <div className="h-px bg-[#50535e]" />
          <LowerAxis h="h-[73px]" clip ticks={[[3, "75.00000"], [37.5, "50.00000"], [71, "25.00000"]]} />
          <div className="h-px bg-[#50535e]" />
          <LowerAxis h="h-[78px]" ticks={[[36, "0.00000"]]} />
          <div className="h-px bg-[#50535e]" />
          <LowerAxis h="h-[63px]" ticks={[[27, "0.00000"], [57, "−0.10000"]]} />
          <div className="h-[2px] bg-[#50535e]" />
        </div>
      </main>

      <footer className="flex flex-1 items-center pl-[6px]">
        <TradingViewLogo />
        <span className="ml-[2px] text-[13px] text-[#d1d4dc]">TradingView</span>
      </footer>
    </div>
  );
}
